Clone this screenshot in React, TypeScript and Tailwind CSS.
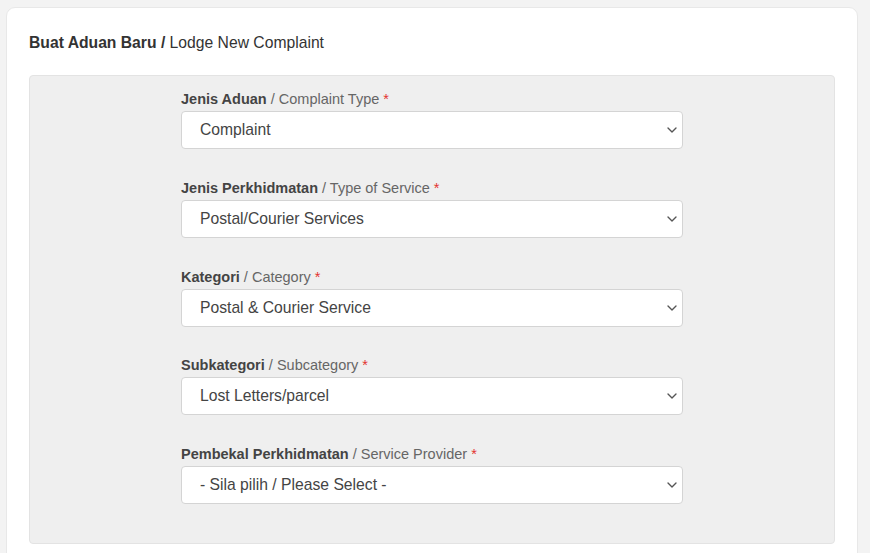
import { ChevronDown } from "lucide-react";

type Field = { bm: string; en: string; value: string };

const fields: Field[] = [
  { bm: "Jenis Aduan", en: "Complaint Type", value: "Complaint" },
  { bm: "Jenis Perkhidmatan", en: "Type of Service", value: "Postal/Courier Services" },
  { bm: "Kategori", en: "Category", value: "Postal & Courier Service" },
  { bm: "Subkategori", en: "Subcategory", value: "Lost Letters/parcel" },
  { bm: "Pembekal Perkhidmatan", en: "Service Provider", value: "- Sila pilih / Please Select -" },
];

function SelectField({ field }: { field: Field }) {
  return (
    <div className="mb-[28.75px]">
      <label className="block h-5 text-[14.5px] leading-5 mb-[2px] text-[#666]">
        <span className="font-bold text-[#444]">{field.bm}</span> / {field.en}{" "}
        <span className="text-[#e3342f]">*</span>
      </label>
      <div className="relative">
        <select
          defaultValue={field.value}
          className="appearance-none w-full h-[38px] bg-white border border-[#d4d4d4] rounded-[4px] pl-[18px] pr-8 text-[15.7px] text-[#444] outline-none"
        >
          <option>{field.value}</option>
        </select>
        <ChevronDown
          size={16}
          strokeWidth={2}
          className="absolute right-[3px] top-[11px] text-[#555] pointer-events-none"
        />
      </div>
    </div>
  );
}

export default function App() {
  return (
    <div
      className="min-h-screen bg-[#f3f3f3] pt-[7px] pl-[6px] pr-[12px]"
      style={{ fontFamily: '"Liberation Sans", Arial, sans-serif' }}
    >
      <div className="bg-white border border-[#e8e8e8] rounded-t-[9px] min-h-[560px] px-[22px] pt-[25px]">
        <h2 className="text-[15.7px] leading-5 text-[#333] mb-[22px]">
          <span className="font-bold">Buat Aduan Baru /</span> Lodge New Complaint
        </h2>
        <div className="bg-[#efefef] border border-[#e3e3e3] rounded-[4px] pt-[13px] pb-[10px]">
          <div className="w-[502px] mx-auto">
            {fields.map(f => (
              <SelectField key={f.bm} field={f} />
            ))}
          </div>
        </div>
      </div>
    </div>
  );
}
